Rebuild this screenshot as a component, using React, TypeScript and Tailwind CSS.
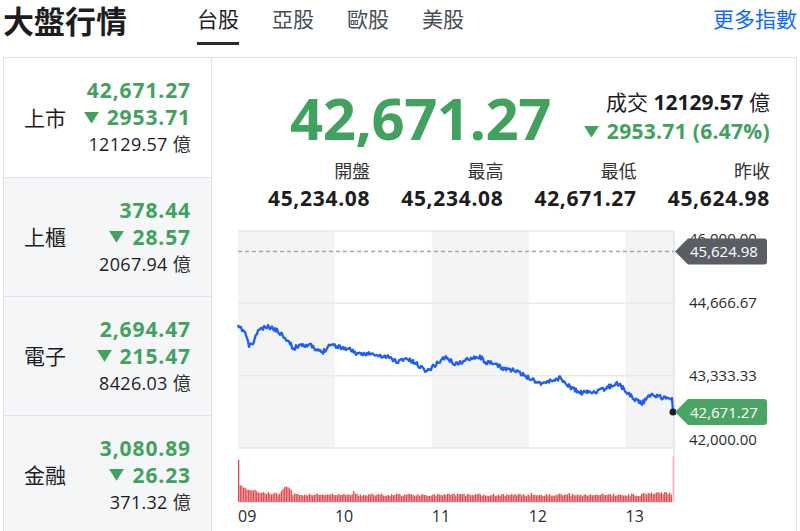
import React from "react";

// market summary widget: index list on the left, TAIEX detail + intraday chart on the right

const GREEN = "#43a15f";
const OX = 212; // chart svg origin (page coords)
const OY = 220;

type Market = { name: string; price: string; change: string; volume: string; active?: boolean };

const markets: Market[] = [
  { name: "上市", price: "42,671.27", change: "2953.71", volume: "12129.57", active: true },
  { name: "上櫃", price: "378.44", change: "28.57", volume: "2067.94" },
  { name: "電子", price: "2,694.47", change: "215.47", volume: "8426.03" },
  { name: "金融", price: "3,080.89", change: "26.23", volume: "371.32" },
];

const stats = [
  { label: "開盤", value: "45,234.08" },
  { label: "最高", value: "45,234.08" },
  { label: "最低", value: "42,671.27" },
  { label: "昨收", value: "45,624.98" },
];

const tabs = ["台股", "亞股", "歐股", "美股"];

// rough intraday shape, page coords
const KEYS: [number, number][] = [
  [238, 327], [240, 328], [245, 332], [249, 346], [254, 342], [258, 330], [268, 327], [275, 329],
  [285, 337], [294, 349], [300, 344], [312, 346], [315, 350], [323, 352], [330, 344], [340, 347],
  [352, 350], [358, 355], [367, 353], [378, 356], [388, 357], [398, 362], [405, 358], [415, 363],
  [427, 371], [435, 365], [445, 357], [455, 364], [463, 362], [472, 357], [480, 357], [487, 363],
  [495, 364], [502, 368], [513, 370], [523, 375], [540, 383], [547, 382], [560, 378], [570, 387],
  [580, 393], [590, 392], [600, 391], [617, 383], [625, 390], [633, 398], [642, 403], [652, 394],
  [663, 398], [672, 398],
];

function rng(seed: number) {
  let s = seed;
  return () => {
    s = (s * 16807) % 2147483647;
    return (s - 1) / 2147483646;
  };
}

const pricePath = (() => {
  const rand = rng(11);
  const pts: string[] = [];
  for (let i = 0; i < KEYS.length - 1; i++) {
    const [x0, y0] = KEYS[i];
    const [x1, y1] = KEYS[i + 1];
    for (let x = x0; x < x1; x += 1) {
      const t = (x - x0) / (x1 - x0);
      const y = y0 + (y1 - y0) * t + (rand() - 0.5) * 4.2;
      pts.push(`${(x - OX).toFixed(1)},${(y - OY).toFixed(1)}`);
    }
  }
  pts.push(`${672 - OX},${398 - OY}`);
  pts.push(`${673 - OX},${412 - OY}`);
  return "M" + pts.join(" L");
})();

const volumeBars = (() => {
  const rand = rng(5);
  return Array.from({ length: 264 }, (_, i) => {
    let h = 6 + 10 * Math.exp(-i / 10) + rand() * 2.5;
    if (i === 0) h = 42;
    if (i >= 26 && i <= 32) h = 9 + (4 - Math.abs(i - 29)) * 1.5 + rand() * 2;
    if (i === 70) h = 11;
    if (i === 178 || i === 201) h = 9;
    if (i > 245) h = 7.5 + rand() * 2.5;
    return { x: 238 + i * 1.645 - OX, h };
  });
})();

const Down = ({ size = 15 }: { size?: number }) => (
  <svg width={size} height={size * 0.78} viewBox="0 0 14 11" className="shrink-0">
    <path d="M0 0 H14 L7 11 Z" fill={GREEN} />
  </svg>
);

function PriceTag({ y, text, color }: { y: number; text: string; color: string }) {
  return (
    <g>
      <path
        d={`M463 ${y} L476 ${y - 13} H552 a3 3 0 0 1 3 3 V${y + 10} a3 3 0 0 1 -3 3 H476 Z`}
        fill={color}
      />
      <text x={478} y={y + 5.5} fontSize={15} fill="#fff">
        {text}
      </text>
    </g>
  );
}

function Chart() {
  const hour = 436 / 4.5;
  const gridY = [11, 83.3, 155.7, 228];
  return (
    <svg width={584} height={311} className="block" fontFamily="'Open Sans', sans-serif">
      {/* session bands */}
      {[0, 2, 4].map((k) => (
        <rect key={k} x={26 + k * hour} y={11} width={k === 4 ? 462 - (26 + 4 * hour) : hour} height={217} fill="#f4f4f4" />
      ))}
      {gridY.map((y) => (
        <line key={y} x1={26} x2={462} y1={y} y2={y} stroke="#e9e9e9" strokeWidth={1.5} />
      ))}
      <line x1={26} x2={462} y1={282} y2={282} stroke="#e6e6e6" />
      <line x1={462} x2={462} y1={11} y2={282} stroke="#d6dae4" />

      {/* previous close */}
      <line x1={26} x2={462} y1={31.5} y2={31.5} stroke="#a8a8a8" strokeWidth={1.5} strokeDasharray="4 3" />

      {/* volume */}
      {volumeBars.map((b, i) => (
        <rect key={i} x={b.x} y={282 - b.h} width={1.3} height={b.h} fill="#e5484d" />
      ))}
      <rect x={460.5} y={236} width={1.5} height={46} fill="#f2b9b9" />

      <path d={pricePath} fill="none" stroke="#1f5ef6" strokeWidth={2.3} strokeLinejoin="round" />
      <circle cx={461} cy={192} r={3.5} fill="#1d1d1f" />

      {/* y axis */}
      <g fontSize={15} fill="#2c2c2c">
        <text x={477} y={24}>46,000.00</text>
        <text x={477} y={88}>44,666.67</text>
        <text x={477} y={161}>43,333.33</text>
        <text x={477} y={225}>42,000.00</text>
      </g>
      <PriceTag y={31.5} text="45,624.98" color="#5a5e64" />
      <PriceTag y={192} text="42,671.27" color="#4aa564" />

      {/* x axis */}
      <g fontSize={16} fill="#2c2c2c">
        {["09", "10", "11", "12", "13"].map((h, i) => (
          <text key={h} x={26 + i * hour} y={302}>
            {h}
          </text>
        ))}
      </g>
    </svg>
  );
}

export default function App() {
  return (
    <div className="w-[800px] h-[531px] overflow-hidden bg-white text-[#1d1d1f] font-['Open_Sans','Noto_Sans_CJK_TC',sans-serif]">
      <header className="flex items-start h-[57px] pl-[3px] pr-[3px]">
        <h1 className="w-[194px] text-[31px] leading-[42px] font-bold">大盤行情</h1>
        <nav className="flex gap-[33px]">
          {tabs.map((t, i) => (
            <div
              key={t}
              className={
                i === 0
                  ? "pt-[5px] pb-[9px] text-[21px] leading-[28px] border-b-[3px] border-[#232a31] text-[#1d1d1f]"
                  : "pt-[5px] pb-[9px] text-[21px] leading-[28px] border-b-[3px] border-transparent text-[#464e56]"
              }
            >
              {t}
            </div>
          ))}
        </nav>
        <a className="ml-auto pt-[5px] text-[21px] leading-[28px] text-[#0f69ff]">更多指數</a>
      </header>

      <div className="mx-[3px] flex border border-[#e2e3e8]">
        <aside className="w-[208px] shrink-0 border-r border-[#e2e3e8]">
          {markets.map((m, i) => (
            <div
              key={m.name}
              className={
                (m.active ? "bg-white" : "bg-[#f5f6f8]") +
                (i > 0 ? " border-t border-[#e2e3e8]" : "") +
                " h-[119px] flex items-center justify-between pl-[20px] pr-[20px]"
              }
            >
              <span className="text-[21px] leading-[28px]">{m.name}</span>
              <div className="flex flex-col items-end leading-[27px]">
                <span className="text-[21px] font-bold tracking-[0.9px]" style={{ color: GREEN }}>
                  {m.price}
                </span>
                <span className="flex items-center gap-[8px] text-[21px] font-bold tracking-[0.9px]" style={{ color: GREEN }}>
                  <Down />
                  {m.change}
                </span>
                <span className="text-[18px] tracking-[0.3px]">
                  {m.volume} <span className="text-[#333]">億</span>
                </span>
              </div>
            </div>
          ))}
        </aside>

        <main className="flex-1 flex flex-col">
          <div className="flex items-start justify-end gap-[33px] pt-[30px] pr-[26px]">
            <span className="text-[58px] leading-[60px] font-bold tracking-[-0.5px]" style={{ color: GREEN }}>
              42,671.27
            </span>
            <div className="flex flex-col items-end text-[21px] leading-[29px]">
              <span>
                成交 <span className="font-bold">12129.57</span> 億
              </span>
              <span className="flex items-center gap-[8px] font-bold tracking-[0.3px]" style={{ color: GREEN }}>
                <Down />
                2953.71 (6.47%)
              </span>
            </div>
          </div>

          <div className="grid grid-cols-4 pl-[25px] pr-[26px] mt-[10px]">
            {stats.map((s) => (
              <div key={s.label} className="flex flex-col items-end">
                <span className="text-[18px] leading-[26px] text-[#333]">{s.label}</span>
                <span className="text-[21px] leading-[28px] font-bold tracking-[0.7px]">{s.value}</span>
              </div>
            ))}
          </div>

          <div className="mt-[8px]">
            <Chart />
          </div>
        </main>
      </div>
    </div>
  );
}
